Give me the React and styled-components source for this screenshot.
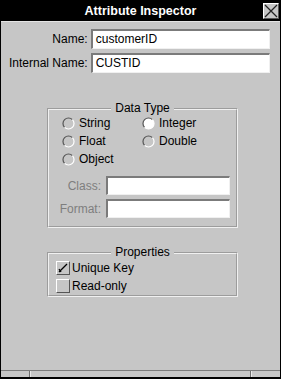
import React from "react";
import styled, { createGlobalStyle } from "styled-components";

const Global = createGlobalStyle`
  html, body { margin: 0; padding: 0; background: #c6c6c6; }
  * { box-sizing: border-box; }
`;

const Frame = styled.div`
  width: 281px;
  height: 379px;
  border: 1px solid #000;
  background: #c6c6c6;
  display: flex;
  flex-direction: column;
  font-family: "Liberation Sans", Arial, sans-serif;
  font-size: 12px;
  color: #000;
`;

const TitleBar = styled.div`
  height: 21px;
  flex: none;
  background: #000;
  border-bottom: 1px solid #e4e4e4;
  display: flex;
  align-items: center;
  justify-content: center;
  position: relative;
`;

const Title = styled.div`
  color: #fff;
  font-weight: bold;
  font-size: 12.5px;
  line-height: 20px;
`;

const CloseButton = styled.div`
  position: absolute;
  right: 1px;
  top: 2px;
  width: 16px;
  height: 16px;
  background: #c6c6c6;
  border-top: 1px solid #fff;
  border-left: 1px solid #fff;
  border-right: 1px solid #555;
  border-bottom: 1px solid #555;
  display: flex;
  align-items: center;
  justify-content: center;
`;

const Body = styled.div`
  flex: 1;
  display: flex;
  flex-direction: column;
  padding: 7px 10px 0 8px;
`;

const FormGrid = styled.div`
  display: grid;
  grid-template-columns: auto 1fr;
  column-gap: 3px;
  row-gap: 4px;
  align-items: center;
`;

const Label = styled.label`
  text-align: right;
  color: ${(p) => (p.$disabled ? "#7e7e7e" : "#000")};
  white-space: nowrap;
`;

const Field = styled.div`
  height: ${(p) => p.$h || 20}px;
  background: #fff;
  border-top: 2px solid #7b7b7b;
  border-left: 2px solid #7b7b7b;
  border-right: 1px solid #f0f0f0;
  border-bottom: 1px solid #f0f0f0;
  padding-left: 3px;
  line-height: 17px;
  font-size: 12px;
`;

const Group = styled.fieldset`
  width: 191px;
  margin: ${(p) => p.$mt}px 0 0 38px;
  padding: 0 6px ${(p) => p.$pb}px 6px;
  border: 2px groove #f0f0f0;
  min-width: 0;
`;

const Legend = styled.legend`
  margin: 0 auto;
  padding: 0 4px;
  font-size: 12px;
  line-height: 13px;
`;

const RadioGrid = styled.div`
  display: grid;
  grid-template-columns: 80px 1fr;
  row-gap: 5px;
  padding: 2px 0 0 7px;
`;

const Option = styled.div`
  display: flex;
  align-items: center;
  gap: 4px;
  height: 13px;
  line-height: 13px;
`;

const SubGrid = styled.div`
  display: grid;
  grid-template-columns: 46px 1fr;
  column-gap: 5px;
  row-gap: 4px;
  align-items: center;
  margin-top: 10px;
`;

const CheckList = styled.div`
  display: flex;
  flex-direction: column;
  gap: 5px;
  padding: 2px 0 0 1px;
`;

const Check = styled.div`
  display: flex;
  align-items: center;
  gap: 2px;
  height: 13px;
`;

const Box = styled.div`
  width: 14px;
  height: 14px;
  background: #c6c6c6;
  border-top: 1px solid #fff;
  border-left: 1px solid #fff;
  border-right: 1px solid #555;
  border-bottom: 1px solid #555;
  display: flex;
  align-items: center;
  justify-content: center;
  flex: none;
`;

const Spacer = styled.div`
  flex: 1;
`;

const StatusBar = styled.div`
  flex: none;
  height: 8px;
  border-top: 1px solid #7b7b7b;
  border-bottom: 1px solid #000;
  display: grid;
  grid-template-columns: 29px 1fr 29px;
  background: #c6c6c6;
`;

const StatusCell = styled.div`
  border-left: ${(p) => (p.$first ? "none" : "1px solid #e8e8e8")};
  border-right: ${(p) => (p.$last ? "none" : "1px solid #6e6e6e")};
`;

const Radio = ({ on }) => (
  <svg width="13" height="13" viewBox="0 0 13 13" style={{ flex: "none" }}>
    <circle cx="6.5" cy="6.5" r="5.5" fill={on ? "#fff" : "#c6c6c6"} />
    <path d="M2.6 10.4 A5.5 5.5 0 0 1 10.4 2.6" fill="none" stroke="#555" strokeWidth="1.2" />
    <path d="M10.4 2.6 A5.5 5.5 0 0 1 2.6 10.4" fill="none" stroke="#fff" strokeWidth="1.2" />
  </svg>
);

const CloseX = () => (
  <svg width="14" height="14" viewBox="0 0 14 14">
    <path d="M1 1 L13 13 M13 1 L1 13" stroke="#222" strokeWidth="1.3" />
  </svg>
);

const Tick = () => (
  <svg width="10" height="10" viewBox="0 0 10 10">
    <path d="M1 9 L9 1" stroke="#000" strokeWidth="1.3" />
    <path d="M1 6 L3 9" stroke="#000" strokeWidth="1.3" />
  </svg>
);

export default function App() {
  return (
    <>
      <Global />
      <Frame>
        <TitleBar>
          <Title>Attribute Inspector</Title>
          <CloseButton>
            <CloseX />
          </CloseButton>
        </TitleBar>
        <Body>
          <FormGrid>
            <Label>Name:</Label>
            <Field>customerID</Field>
            <Label>Internal Name:</Label>
            <Field>CUSTID</Field>
          </FormGrid>

          <Group $mt={29} $pb={8}>
            <Legend>Data Type</Legend>
            <RadioGrid>
              <Option><Radio />String</Option>
              <Option><Radio on />Integer</Option>
              <Option><Radio />Float</Option>
              <Option><Radio />Double</Option>
              <Option><Radio />Object</Option>
            </RadioGrid>
            <SubGrid>
              <Label $disabled>Class:</Label>
              <Field $h={19} />
              <Label $disabled>Format:</Label>
              <Field $h={19} />
            </SubGrid>
          </Group>

          <Group $mt={18} $pb={3}>
            <Legend>Properties</Legend>
            <CheckList>
              <Check><Box><Tick /></Box>Unique Key</Check>
              <Check><Box />Read-only</Check>
            </CheckList>
          </Group>
          <Spacer />
        </Body>
        <StatusBar>
          <StatusCell $first />
          <StatusCell />
          <StatusCell $last />
        </StatusBar>
      </Frame>
    </>
  );
}
